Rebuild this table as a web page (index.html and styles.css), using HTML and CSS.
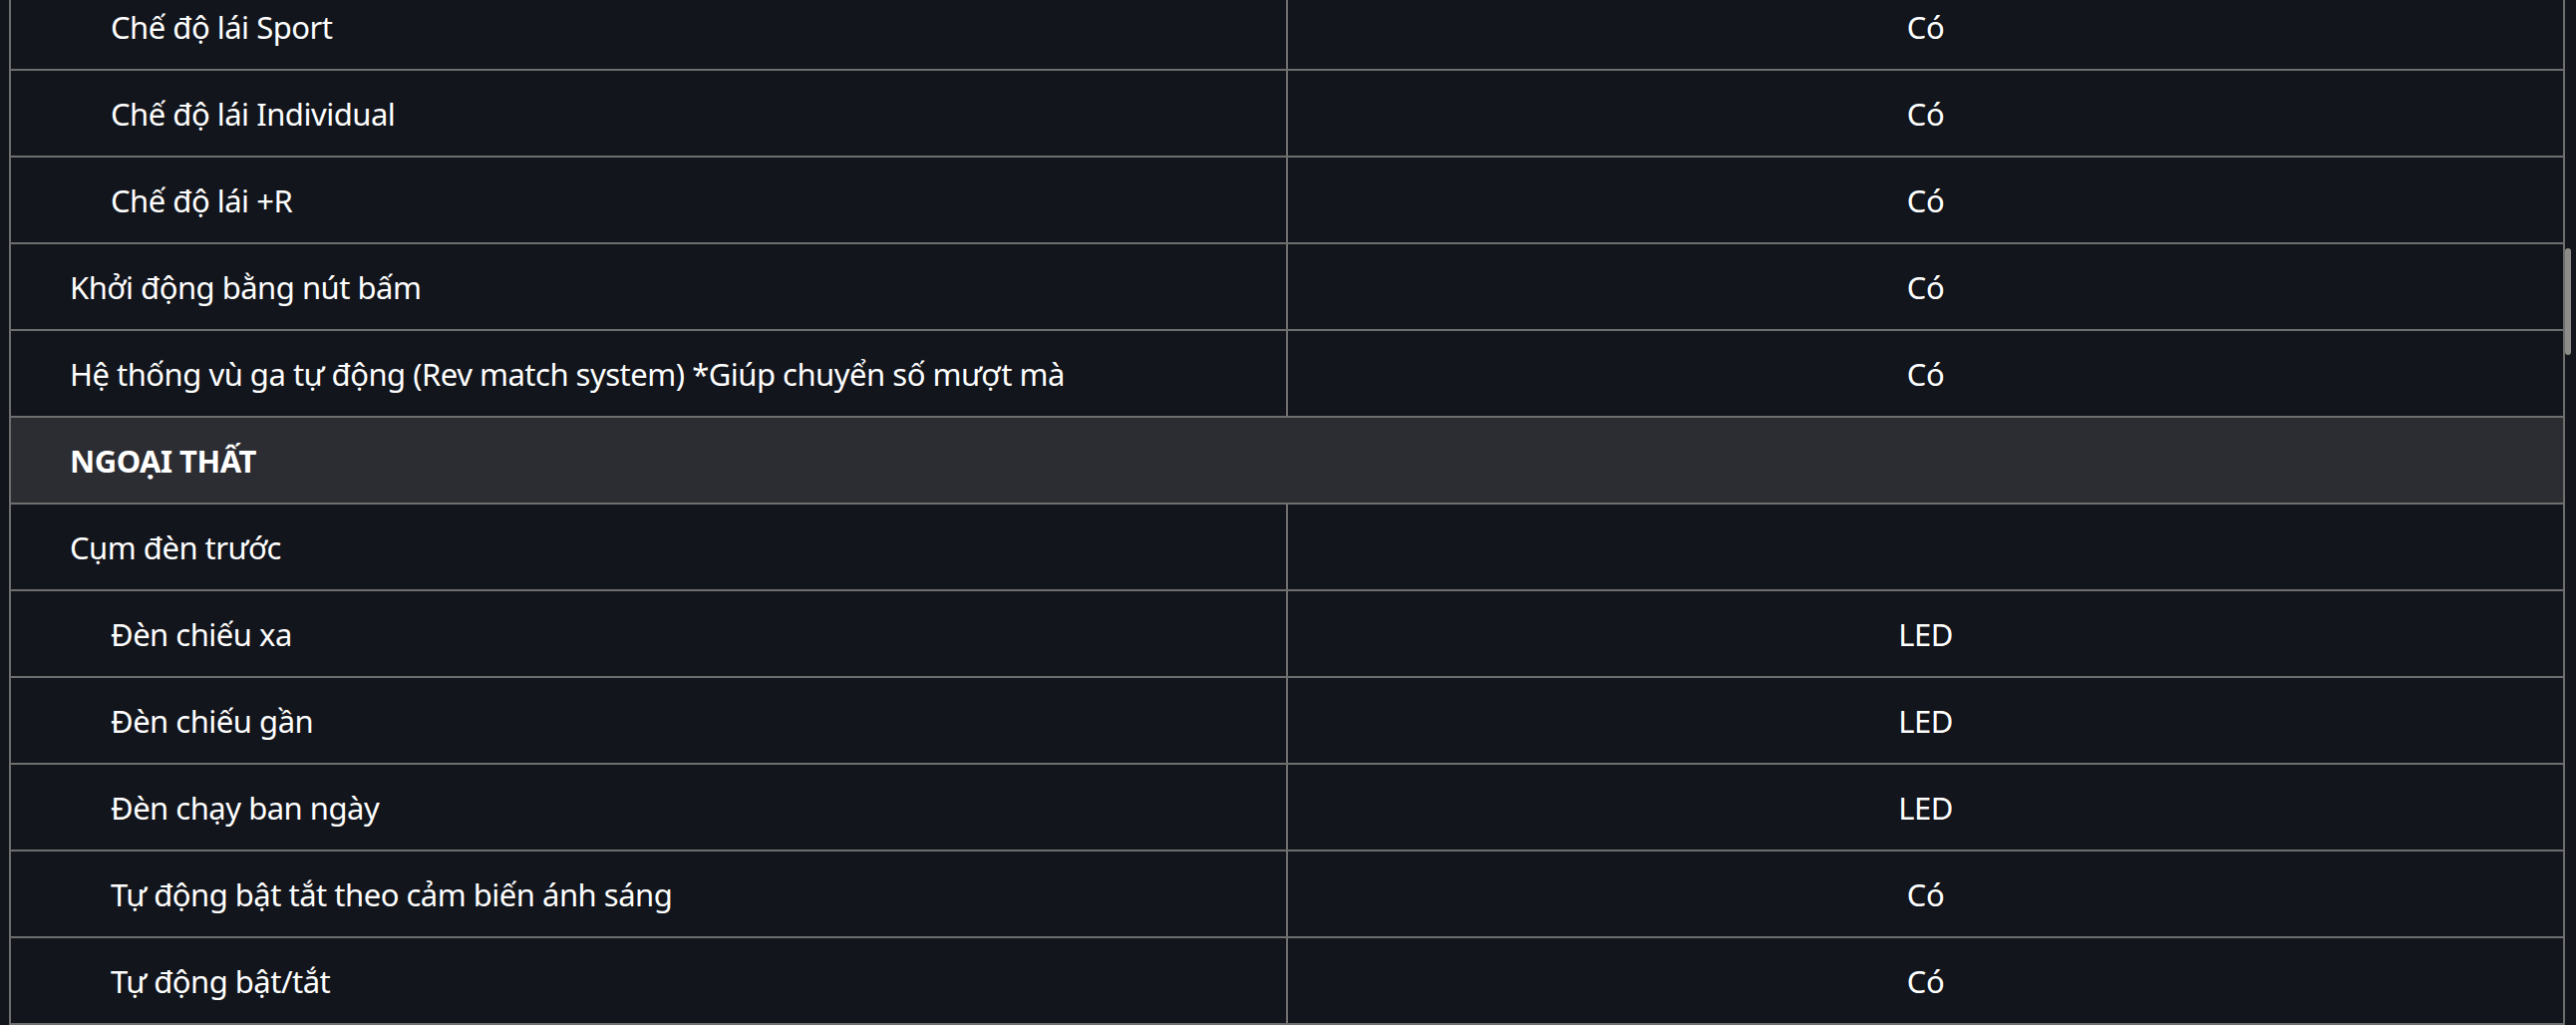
FILE: index.html
```html
<!DOCTYPE html>
<html lang="vi">
<head>
<meta charset="utf-8">
<title>Thông số kỹ thuật</title>
<link rel="stylesheet" href="styles.css">
</head>
<body>
<div class="viewport">
  <div class="spec">
    <div class="row"><div class="label sub">Chế độ lái Sport</div><div class="value">Có</div></div>
    <div class="row"><div class="label sub">Chế độ lái Individual</div><div class="value">Có</div></div>
    <div class="row"><div class="label sub">Chế độ lái +R</div><div class="value">Có</div></div>
    <div class="row"><div class="label">Khởi động bằng nút bấm</div><div class="value">Có</div></div>
    <div class="row"><div class="label">Hệ thống vù ga tự động (Rev match system) *Giúp chuyển số mượt mà</div><div class="value">Có</div></div>
    <div class="row section"><div class="section-title">NGOẠI THẤT</div></div>
    <div class="row"><div class="label">Cụm đèn trước</div><div class="value"></div></div>
    <div class="row"><div class="label sub">Đèn chiếu xa</div><div class="value">LED</div></div>
    <div class="row"><div class="label sub">Đèn chiếu gần</div><div class="value">LED</div></div>
    <div class="row"><div class="label sub">Đèn chạy ban ngày</div><div class="value">LED</div></div>
    <div class="row"><div class="label sub">Tự động bật tắt theo cảm biến ánh sáng</div><div class="value">Có</div></div>
    <div class="row"><div class="label sub">Tự động bật/tắt</div><div class="value">Có</div></div>
  </div>
  <div class="scroll-thumb"></div>
</div>
</body>
</html>
```

FILE: styles.css
```css
html, body {
  margin: 0;
  padding: 0;
  background: #12151c;
  height: 1028px;
  overflow: hidden;
}

body {
  font-family: "Noto Sans", "Open Sans", sans-serif;
  font-size: 31px;
  letter-spacing: -0.5px;
  color: #ffffff;
}

.viewport {
  position: relative;
  height: 1028px;
  overflow: hidden;
}

.spec {
  width: 2564px;
  box-sizing: border-box;
  margin: -18px 0 0 9px;
  border: 2px solid #6e6e6e;
  border-bottom: none;
}

.row {
  display: grid;
  grid-template-columns: 1281px 1279px;
  height: 87px;
  box-sizing: border-box;
  border-bottom: 2px solid #6e6e6e;
}

.label,
.value,
.section-title {
  display: flex;
  align-items: center;
  white-space: nowrap;
}

.label {
  box-sizing: border-box;
  border-right: 2px solid #6e6e6e;
  padding-left: 59px;
}

.label.sub {
  padding-left: 100px;
}

.value {
  justify-content: center;
}

.section {
  background: #2c2d32;
  grid-template-columns: 1fr;
}

.section-title {
  padding-left: 59px;
  font-weight: 700;
}

.scroll-thumb {
  position: absolute;
  left: 2573px;
  top: 249px;
  width: 6px;
  height: 107px;
  border-radius: 3px;
  background: #8c8c8a;
}
```
